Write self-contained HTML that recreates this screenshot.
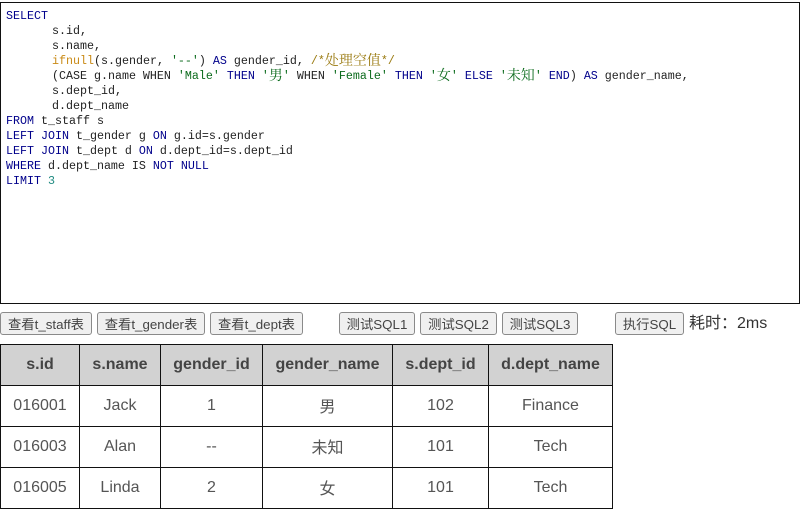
<!DOCTYPE html>
<html><head><meta charset="utf-8">
<style>
html,body{margin:0;padding:0;background:#fff;width:803px;height:512px;overflow:hidden;position:relative;font-family:"Liberation Sans","Noto Sans CJK SC",sans-serif}
#ed{position:absolute;left:0;top:2px;width:800px;height:302px;border:1px solid #111;box-sizing:border-box}
.l{position:absolute;white-space:pre;font:11.67px/15px "Liberation Mono","Noto Serif CJK SC",monospace;color:#222;height:15px}
.l i{font-style:normal}
.k{color:#00008b}.f{color:#c98a16}.s{color:#0b6b1c}.c{color:#9a7a10}.n{color:#1f8a80}
.l .z{font-size:14px;line-height:0;font-family:"Noto Serif CJK SC",serif;position:relative;top:1px}
.b{position:absolute;top:312px;height:23px;box-sizing:border-box;background:#f0f0f0;border:1px solid #8a8a8a;border-radius:3px;font-size:13.33px;line-height:23px;color:#444;text-align:center;white-space:nowrap}
#t{position:absolute;left:689px;top:314px;font-size:16px;line-height:20px;color:#333;white-space:nowrap}
table{position:absolute;left:0;top:344px;border-collapse:collapse;table-layout:fixed;width:613px;font-size:16px;color:#555;line-height:18px}
td,th{border:1px solid #111;padding:0;height:40px;box-sizing:border-box;text-align:center;font-weight:normal;white-space:nowrap}
th{background:#d2d2d2;font-weight:bold;color:#444}
tr{height:41px}
td span{line-height:0;position:relative;top:2px}
</style></head><body>
<div id="ed"></div>
<div class="l k" style="left:6px;top:9px">SELECT</div>
<div class="l" style="left:52px;top:24px">s.id,</div>
<div class="l" style="left:52px;top:39px">s.name,</div>
<div class="l" style="left:52px;top:54px"><i class="f">ifnull</i>(s.gender, <i class="s">'--'</i>) <i class="k">AS</i> gender_id, <i class="c">/*<i class="z">处理空值</i>*/</i></div>
<div class="l" style="left:52px;top:69px">(CASE g.name WHEN <i class="s">'Male'</i> <i class="k">THEN</i> <i class="s">'<i class="z">男</i>'</i> WHEN <i class="s">'Female'</i> <i class="k">THEN</i> <i class="s">'<i class="z">女</i>'</i> <i class="k">ELSE</i> <i class="s">'<i class="z">未知</i>'</i> <i class="k">END</i>) <i class="k">AS</i> gender_name,</div>
<div class="l" style="left:52px;top:84px">s.dept_id,</div>
<div class="l" style="left:52px;top:99px">d.dept_name</div>
<div class="l" style="left:6px;top:114px"><i class="k">FROM</i> t_staff s</div>
<div class="l" style="left:6px;top:129px"><i class="k">LEFT JOIN</i> t_gender g <i class="k">ON</i> g.id=s.gender</div>
<div class="l" style="left:6px;top:144px"><i class="k">LEFT JOIN</i> t_dept d <i class="k">ON</i> d.dept_id=s.dept_id</div>
<div class="l" style="left:6px;top:159px"><i class="k">WHERE</i> d.dept_name IS <i class="k">NOT NULL</i></div>
<div class="l" style="left:6px;top:174px"><i class="k">LIMIT</i> <i class="n">3</i></div>

<div class="b" style="left:0;width:92px">查看t_staff表</div>
<div class="b" style="left:97px;width:108px">查看t_gender表</div>
<div class="b" style="left:210px;width:93px">查看t_dept表</div>
<div class="b" style="left:339px;width:76px">测试SQL1</div>
<div class="b" style="left:420px;width:77px">测试SQL2</div>
<div class="b" style="left:502px;width:76px">测试SQL3</div>
<div class="b" style="left:615px;width:69px">执行SQL</div>
<div id="t">耗时：2ms</div>

<table>
<colgroup><col style="width:79px"><col style="width:81px"><col style="width:102px"><col style="width:130px"><col style="width:96px"><col style="width:124px"></colgroup>
<tr><th>s.id</th><th>s.name</th><th>gender_id</th><th>gender_name</th><th>s.dept_id</th><th>d.dept_name</th></tr>
<tr><td>016001</td><td>Jack</td><td>1</td><td><span>男</span></td><td>102</td><td>Finance</td></tr>
<tr><td>016003</td><td>Alan</td><td>--</td><td><span>未知</span></td><td>101</td><td>Tech</td></tr>
<tr><td>016005</td><td>Linda</td><td>2</td><td><span>女</span></td><td>101</td><td>Tech</td></tr>
</table>
</body></html>
